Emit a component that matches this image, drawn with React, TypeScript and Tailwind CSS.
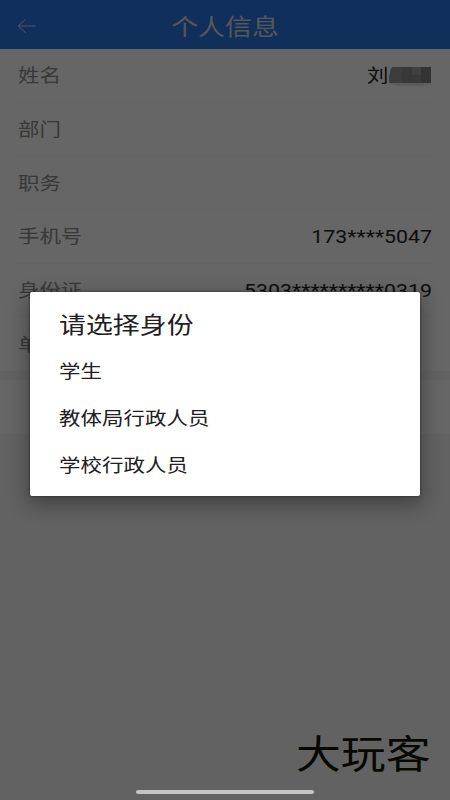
import React from 'react';

const rows = [
  { label: '姓名', value: '刘', masked: true },
  { label: '部门', value: '' },
  { label: '职务', value: '' },
  { label: '手机号', value: '173****5047' },
  { label: '身份证', value: '5303**********0319' },
  { label: '单位', value: '' },
];

const options = ['学生', '教体局行政人员', '学校行政人员'];

function MaskedName() {
  return (
    <svg className="h-[22px] w-[44px]" viewBox="0 0 44 22">
      <path d="M4 2H43V18H1Q1 8 4 2Z" fill="#8d8d8d" />
      <path d="M4 2H14V18H1Q1 8 4 2Z" fill="#969696" />
      <path d="M24 2H33V10H24Z" fill="#a0a0a0" />
      <path d="M33 2H43V18H33Z" fill="#818181" />
      <path d="M2 18H43V19Q34 22 22 21Q8 22 2 18Z" fill="#e5e5e5" />
    </svg>
  );
}

export default function App() {
  return (
    <div className="relative flex h-[800px] w-[450px] flex-col overflow-hidden bg-[#f4f4f4] font-['Roboto','Noto_Sans_CJK_SC',sans-serif]">
      <header className="grid h-[49px] shrink-0 grid-cols-[50px_1fr_50px] items-center bg-[#2a75e4]">
        <svg className="ml-[17px] mt-[3px] h-4 w-5" viewBox="0 0 20 16" fill="none" stroke="#d2d7df" strokeWidth="1">
          <path d="M9 1L1 8L9 15M1 8H18.5" />
        </svg>
        <h1 className="mt-[6px] origin-center scale-x-[1.17] text-center text-[23px] leading-8 text-[#d6d9df]">个人信息</h1>
      </header>
      <main>
        <section className="bg-white">
          {rows.map((row) => (
            <div key={row.label} className="ml-[18px] mr-[18px] flex h-[53.7px] items-center justify-between border-b border-[#f8f8f8] pt-[1.6px] text-[18.4px] leading-7">
              <span className="origin-left scale-x-[1.165] text-[#8d8d8d]">{row.label}</span>
              <span className="flex items-center text-[#242424]">
                <span className={row.masked ? 'origin-right scale-x-[1.165]' : 'origin-right scale-x-[1.16]'}>{row.value}</span>
                {row.masked && <MaskedName />}
              </span>
            </div>
          ))}
        </section>
        <section className="mt-[9px] h-[54px] bg-white" />
      </main>

      <div className="absolute inset-0 bg-black/60">
        <div className="ml-[30px] mt-[292px] flex h-[204px] w-[390px] flex-col rounded-[2px] bg-white pl-[29px] pt-[17px] text-[#202020] shadow-[0_7px_20px_3px_rgba(0,0,0,0.3),0_0_3px_rgba(0,0,0,0.5)]">
          <h2 className="w-max origin-left scale-x-[1.17] text-[23px] leading-[34px]">请选择身份</h2>
          <ul className="mt-[5px] text-[18.4px] leading-[47px]">
            {options.map((option) => (
              <li key={option} className="w-max origin-left scale-x-[1.168]">{option}</li>
            ))}
          </ul>
        </div>
      </div>

      <div className="absolute left-[296px] top-[730px] w-max origin-left scale-x-[1.15] text-[39px] leading-[50px] text-[#080803]">大玩客</div>
      <div className="absolute left-[136px] top-[790px] h-[4px] w-[178px] rounded-full bg-[#c6c6c6]" />
    </div>
  );
}
